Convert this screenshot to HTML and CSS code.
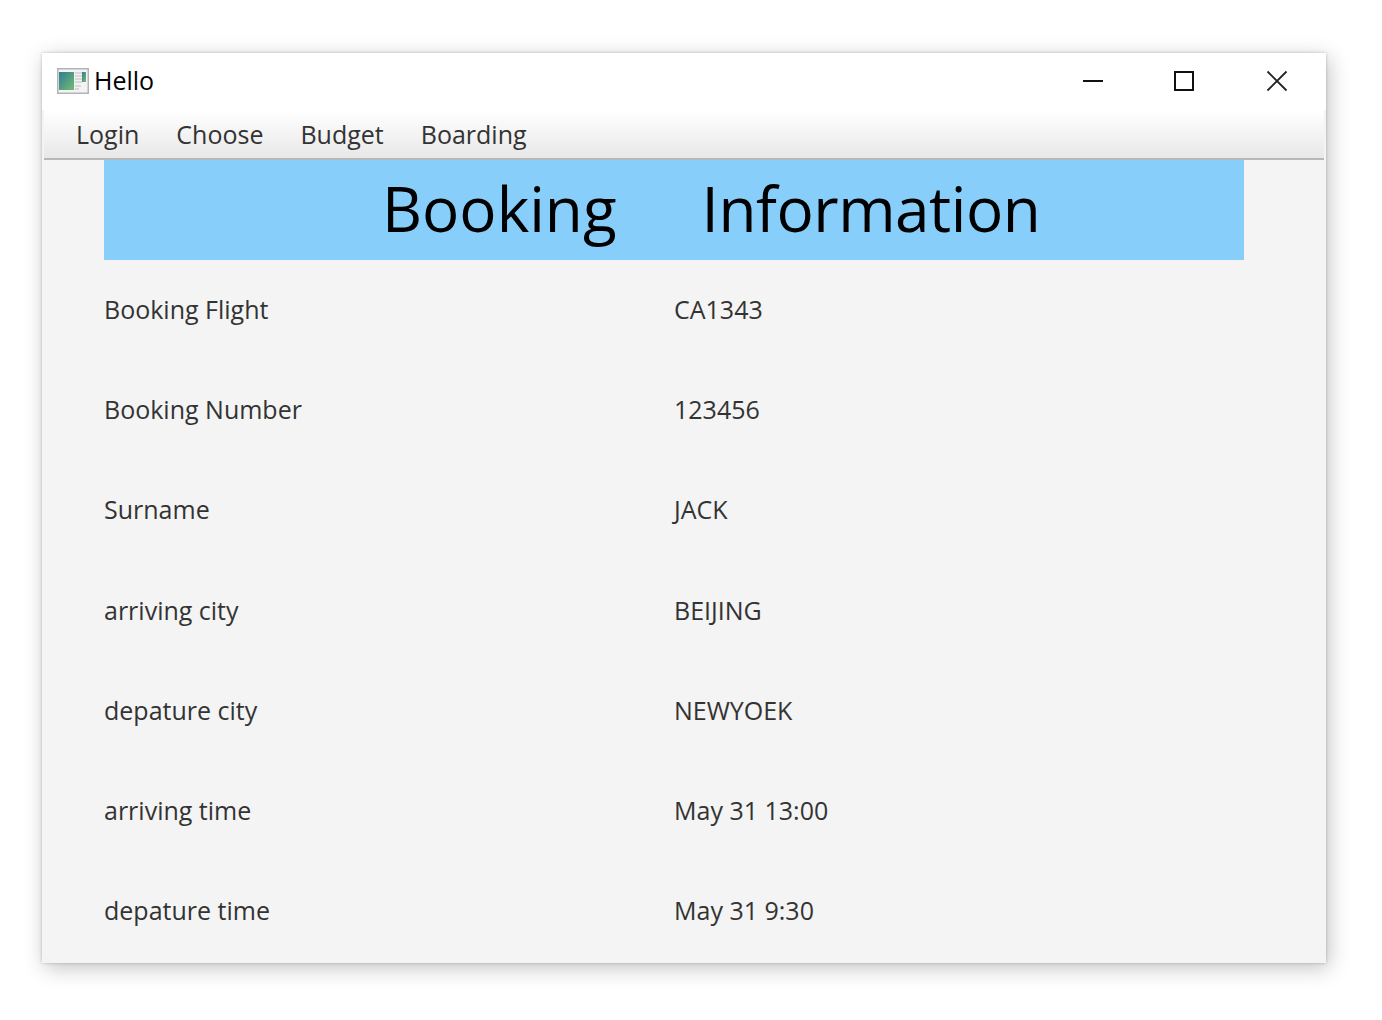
FILE: index.html
```html
<!DOCTYPE html>
<html lang="en">
<head>
    <meta charset="UTF-8">
    <title>Hello</title>
    <link rel="stylesheet" href="styles.css">
</head>
<body>

    <div class="window">
        <div class="titlebar">
            <svg class="app-icon" width="32" height="26" viewBox="0 0 32 26">
                <defs>
                    <linearGradient id="pane" x1="0" y1="0" x2="1" y2="1">
                        <stop offset="0" stop-color="#2f7d8f"/>
                        <stop offset="1" stop-color="#74bc74"/>
                    </linearGradient>
                </defs>
                <rect x="0.75" y="0.75" width="30.500" height="24.500" fill="#f3f3f3" stroke="#b0b4b8" stroke-width="1.500"/>
                <rect x="2" y="4" width="15" height="18" fill="url(#pane)"/>
                <path d="M18 5h7M18 8h7M18 11h7M18 14h7M18 18h6M18 21h4" stroke="#cfcfcf" stroke-width="1.400"/>
                <rect x="25" y="4" width="4" height="10" fill="url(#pane)"/>
            </svg>
            <span class="title">Hello</span>
            <div class="controls">
                <button class="control">
                    <svg width="22" height="22" viewBox="0 0 22 22"><path d="M1 11h20" stroke="#111" stroke-width="2"/></svg>
                </button>
                <button class="control">
                    <svg width="22" height="22" viewBox="0 0 22 22"><rect x="2" y="2" width="18" height="18" fill="none" stroke="#111" stroke-width="2"/></svg>
                </button>
                <button class="control">
                    <svg width="22" height="22" viewBox="0 0 22 22"><path d="M1.500 1.500l19 19M20.500 1.500l-19 19" stroke="#222" stroke-width="1.800"/></svg>
                </button>
            </div>
        </div>

        <nav class="menubar">
            <span class="menu-item">Login</span>
            <span class="menu-item">Choose</span>
            <span class="menu-item">Budget</span>
            <span class="menu-item">Boarding</span>
        </nav>

        <div class="content">
            <h1 class="banner"><span>Booking</span><span class="banner-tight">Information</span></h1>
            <div class="info-row"><span class="info-label">Booking Flight</span><span>CA1343</span></div>
            <div class="info-row"><span class="info-label">Booking Number</span><span>123456</span></div>
            <div class="info-row"><span class="info-label">Surname</span><span>JACK</span></div>
            <div class="info-row"><span class="info-label">arriving city</span><span>BEIJING</span></div>
            <div class="info-row"><span class="info-label">depature city</span><span>NEWYOEK</span></div>
            <div class="info-row"><span class="info-label">arriving time</span><span>May 31 13:00</span></div>
            <div class="info-row"><span class="info-label">depature time</span><span>May 31 9:30</span></div>
        </div>
    </div>

</body>
</html>
```

FILE: styles.css
```css
html, body {
    height: 100%;
}

body {
    margin: 0;
    padding-top: 53px;
    box-sizing: border-box;
    background-color: #fff;
    font-family: "Open Sans", "Noto Sans", sans-serif;
}

.window {
    box-sizing: border-box;
    width: 1284px;
    height: 910px;
    margin-left: 42px;
    padding: 0 2px;
    background-color: #f4f4f4;
    box-shadow: 0 0 3px rgba(0, 0, 0, 0.22), 3px 5px 20px rgba(0, 0, 0, 0.24);
    overflow: hidden;
}

.titlebar {
    display: flex;
    align-items: center;
    box-sizing: border-box;
    height: 57px;
    margin: 0 -2px;
    padding: 0 0 2px 15px;
    background-color: #fff;
}

.app-icon {
    margin-right: 5px;
}

.title {
    margin-bottom: 2px;
    font-size: 25px;
    color: #000;
}

.controls {
    display: flex;
    margin-left: auto;
    margin-right: 3px;
}

.control {
    display: flex;
    align-items: center;
    justify-content: center;
    width: 92px;
    height: 55px;
    padding: 0;
    border: none;
    background: none;
}

.control:nth-child(2) {
    width: 90px;
    margin-right: 2px;
}

.menubar {
    display: flex;
    gap: 37px;
    box-sizing: border-box;
    height: 50px;
    padding: 7px 0 0 32px;
    background: linear-gradient(#fff, #e8e8e8);
    border-bottom: 2px solid #b8b8b8;
    font-size: 25px;
    color: #333;
}

.content {
    padding-left: 60px;
}

.banner {
    display: flex;
    gap: 85px;
    width: 1140px;
    height: 100px;
    margin: 0;
    padding-left: 278px;
    box-sizing: border-box;
    background-color: #87cefa;
    color: #000;
    font-size: 62px;
    font-weight: 400;
    line-height: 96px;
}

.banner-tight {
    letter-spacing: -0.450px;
}

.info-row {
    display: flex;
    align-items: center;
    box-sizing: border-box;
    height: 100.300px;
    padding-bottom: 3px;
    font-size: 25px;
    color: #333;
}

.info-label {
    width: 570px;
}
```
